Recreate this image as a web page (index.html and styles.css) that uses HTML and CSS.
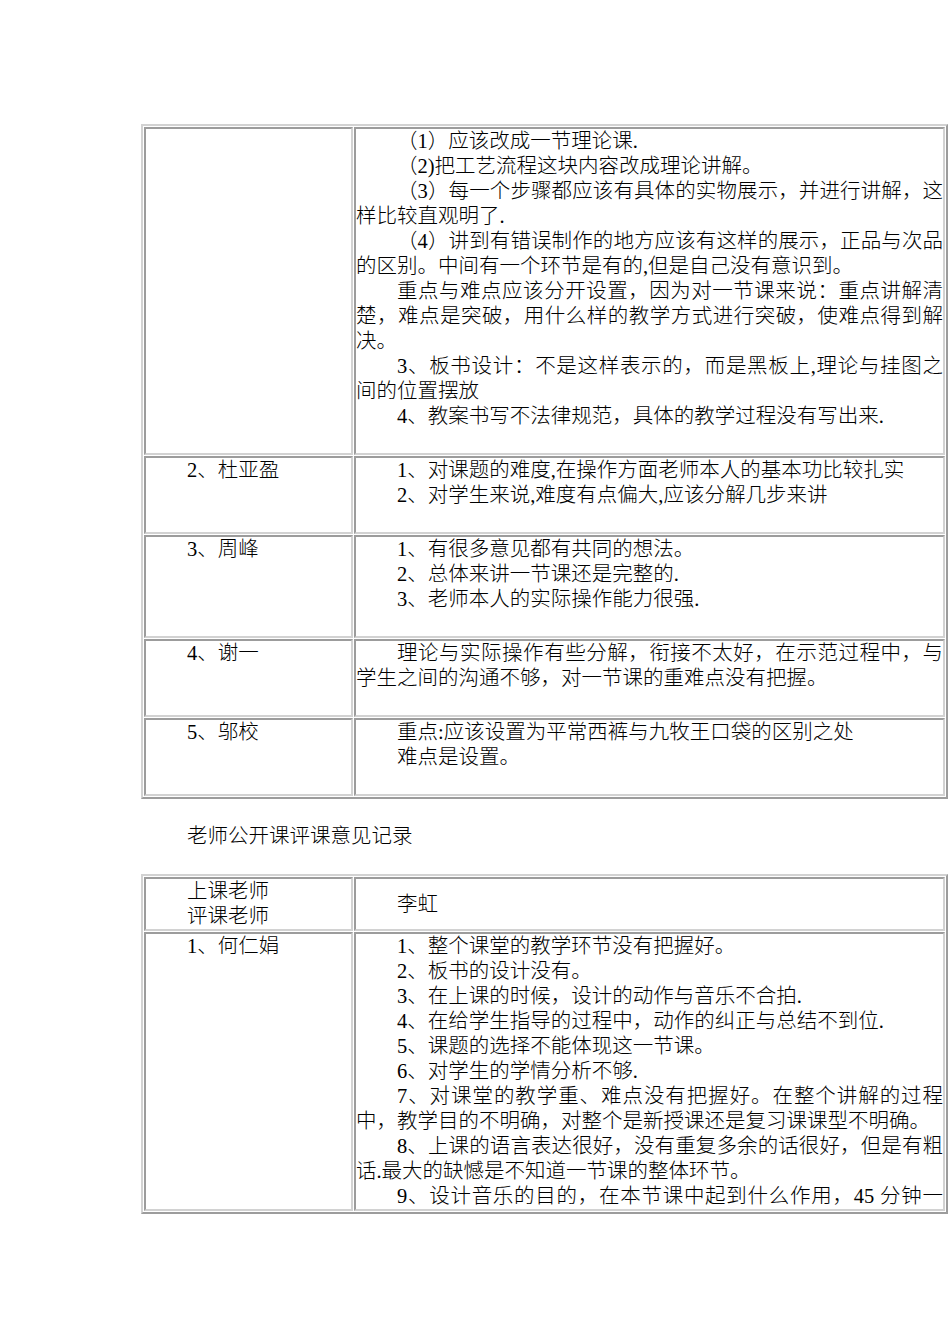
FILE: index.html
```html
<!DOCTYPE html>
<html lang="zh-CN">
<head>
<meta charset="utf-8">
<title>老师公开课评课意见记录</title>
<link rel="stylesheet" href="styles.css">
</head>
<body>
<div class="page">
  <table class="review review--spaced">
    <tr>
      <td class="who"></td>
      <td class="notes">
        <p class="ind">（1）应该改成一节理论课.</p>
        <p class="ind">（2)把工艺流程这块内容改成理论讲解。</p>
        <p class="ind"><span class="line">（3）每一个步骤都应该有具体的实物展示，并进行讲解，这</span>样比较直观明了.</p>
        <p class="ind"><span class="line">（4）讲到有错误制作的地方应该有这样的展示，正品与次品</span>的区别。中间有一个环节是有的,但是自己没有意识到。</p>
        <p class="ind"><span class="line">重点与难点应该分开设置，因为对一节课来说：重点讲解清</span><span class="line cont">楚，难点是突破，用什么样的教学方式进行突破，使难点得到解</span>决。</p>
        <p class="ind"><span class="line">3、板书设计：不是这样表示的，而是黑板上,理论与挂图之</span>间的位置摆放</p>
        <p class="ind">4、教案书写不法律规范，具体的教学过程没有写出来.</p>
      </td>
    </tr>
    <tr>
      <td class="who"><p class="ind">2、杜亚盈</p></td>
      <td class="notes">
        <p class="ind">1、对课题的难度,在操作方面老师本人的基本功比较扎实</p>
        <p class="ind">2、对学生来说,难度有点偏大,应该分解几步来讲</p>
      </td>
    </tr>
    <tr>
      <td class="who"><p class="ind">3、周峰</p></td>
      <td class="notes">
        <p class="ind">1、有很多意见都有共同的想法。</p>
        <p class="ind">2、总体来讲一节课还是完整的.</p>
        <p class="ind">3、老师本人的实际操作能力很强.</p>
      </td>
    </tr>
    <tr>
      <td class="who"><p class="ind">4、谢一</p></td>
      <td class="notes">
        <p class="ind"><span class="line">理论与实际操作有些分解，衔接不太好，在示范过程中，与</span>学生之间的沟通不够，对一节课的重难点没有把握。</p>
      </td>
    </tr>
    <tr>
      <td class="who"><p class="ind">5、邬校</p></td>
      <td class="notes">
        <p class="ind">重点:应该设置为平常西裤与九牧王口袋的区别之处</p>
        <p class="ind">难点是设置。</p>
      </td>
    </tr>
  </table>

  <p class="title">老师公开课评课意见记录</p>

  <table class="review">
    <tr>
      <td class="who">
        <p class="ind">上课老师</p>
        <p class="ind">评课老师</p>
      </td>
      <td class="notes mid"><p class="ind">李虹</p></td>
    </tr>
    <tr>
      <td class="who"><p class="ind">1、何仁娟</p></td>
      <td class="notes">
        <p class="ind">1、整个课堂的教学环节没有把握好。</p>
        <p class="ind">2、板书的设计没有。</p>
        <p class="ind">3、在上课的时候，设计的动作与音乐不合拍.</p>
        <p class="ind">4、在给学生指导的过程中，动作的纠正与总结不到位.</p>
        <p class="ind">5、课题的选择不能体现这一节课。</p>
        <p class="ind">6、对学生的学情分析不够.</p>
        <p class="ind"><span class="line">7、对课堂的教学重、难点没有把握好。在整个讲解的过程</span>中，教学目的不明确，对整个是新授课还是复习课课型不明确。</p>
        <p class="ind"><span class="line">8、上课的语言表达很好，没有重复多余的话很好，但是有粗</span>话.最大的缺憾是不知道一节课的整体环节。</p>
        <p class="ind"><span class="line">9、设计音乐的目的，在本节课中起到什么作用，45 分钟一</span></p>
      </td>
    </tr>
  </table>
</div>
</body>
</html>
```

FILE: styles.css
```css
html, body {
  margin: 0;
  padding: 0;
  background: #ffffff;
}

body {
  font-family: "Liberation Serif", "Noto Sans CJK SC", serif;
  font-size: 20.5px;
  line-height: 25px;
  font-weight: 300;
  color: #000000;
}

.page {
  padding: 124px 2px 0 141px;
}

p {
  margin: 0;
}

.ind {
  text-indent: 2em;
}

.review {
  width: 807px;
  table-layout: fixed;
  border-collapse: separate;
  border-spacing: 1px;
  border: 2px solid;
  border-color: #d2d2d2 #9c9c9c #9c9c9c #d2d2d2;
}

.review td {
  padding: 0;
  vertical-align: top;
  border: 2px solid;
  border-color: #9c9c9c #d2d2d2 #d2d2d2 #9c9c9c;
}

.review td.who {
  width: 205px;
}

.review td.mid {
  vertical-align: middle;
}

.review--spaced td {
  padding-bottom: 24px;
}

.line {
  display: block;
  text-align: justify;
  text-align-last: justify;
}

.line.cont {
  text-indent: 0;
}

.title {
  margin: 25px 0;
  padding-left: 46px;
}
```
